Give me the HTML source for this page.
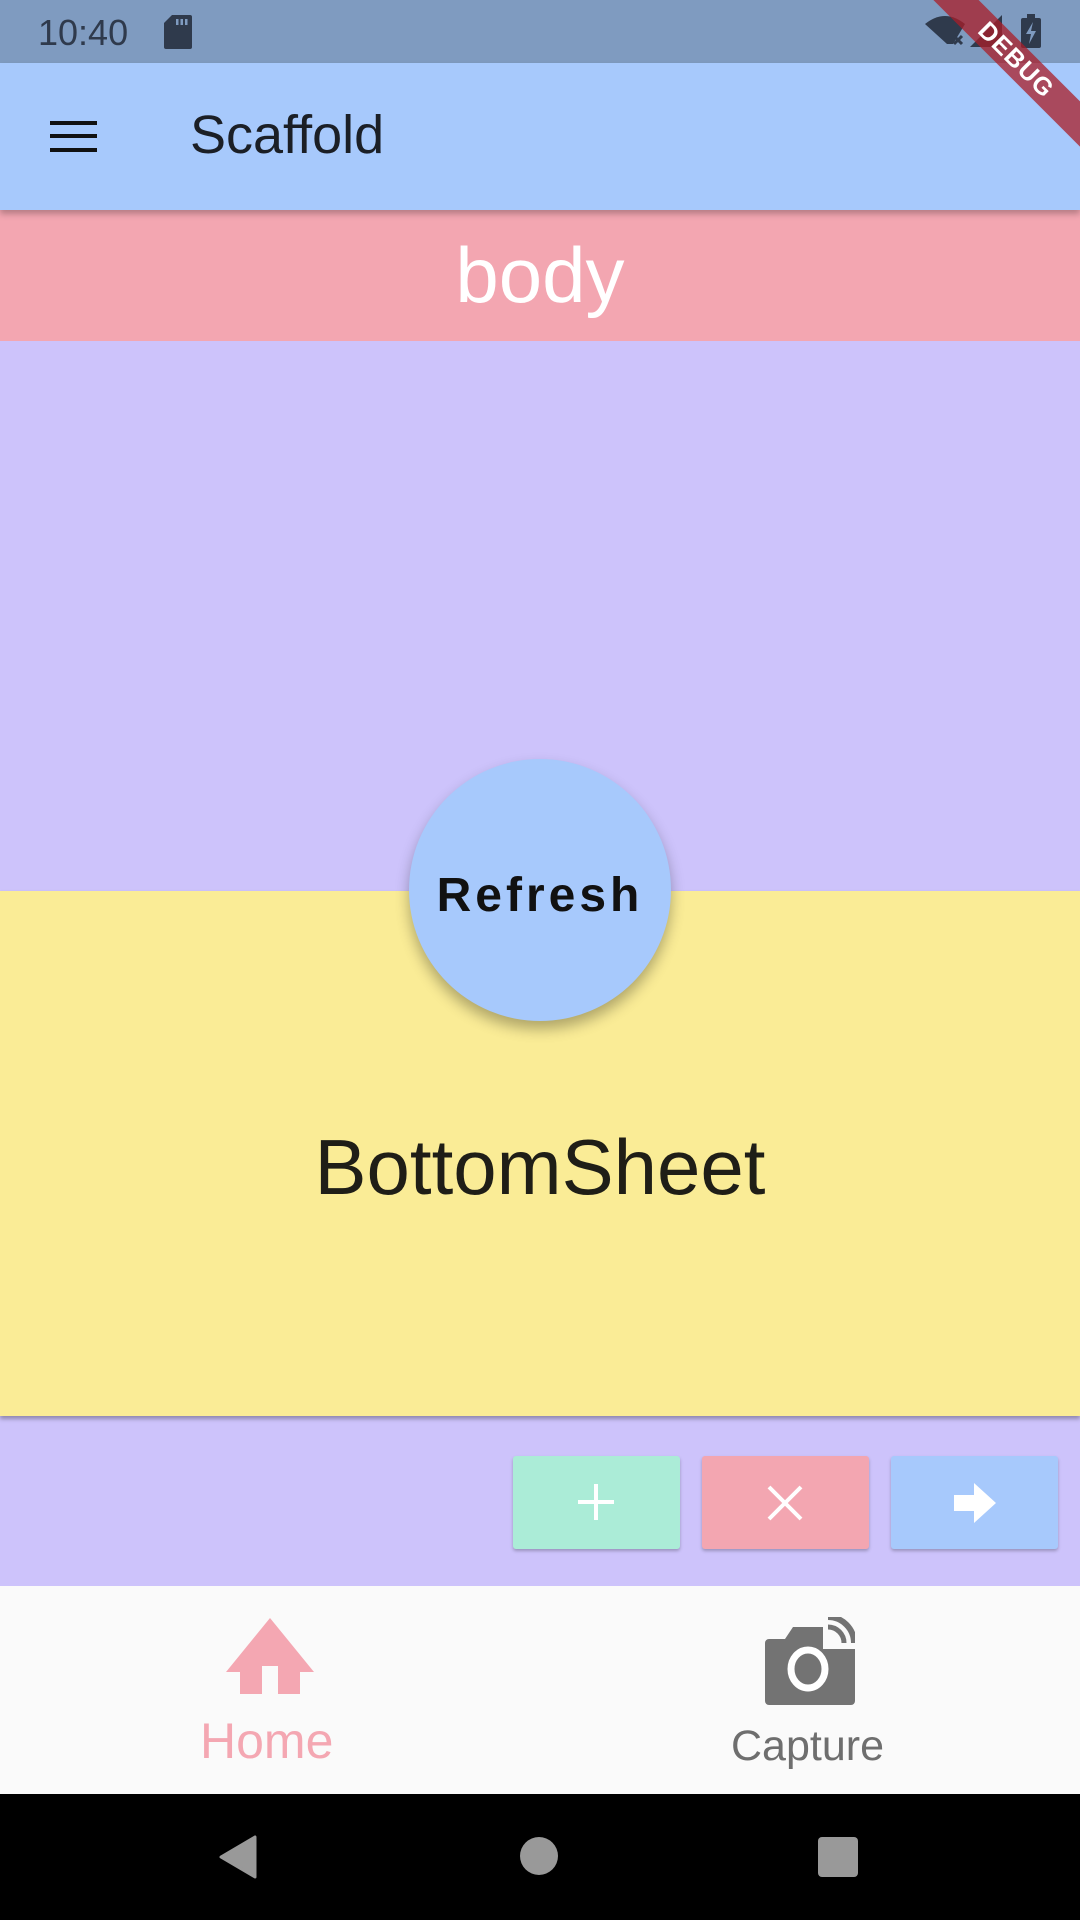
<!DOCTYPE html>
<html><head><meta charset="utf-8"><style>
*{margin:0;padding:0;box-sizing:border-box}
body{width:1080px;height:1920px;position:relative;overflow:hidden;font-family:"Liberation Sans",sans-serif;background:#cdc3fb}
.a{position:absolute}
</style></head><body>
<div class="a" style="left:0;top:0;width:1080px;height:63px;background:#7f9bc0"></div>
<div class="a" style="left:38px;top:12px;font-size:36px;color:#2f3a4c">10:40</div>
<svg class="a" style="left:164px;top:15px" width="28" height="34" viewBox="0 0 28 34"><path d="M8 0H26a2 2 0 0 1 2 2V32a2 2 0 0 1-2 2H2a2 2 0 0 1-2-2V8Z" fill="#2f3a4c"/><rect x="12" y="4" width="2.5" height="6" fill="#7f9bc0"/><rect x="16.5" y="4" width="2.5" height="6" fill="#7f9bc0"/><rect x="21" y="4" width="2.5" height="6" fill="#7f9bc0"/></svg>
<svg class="a" style="left:925px;top:14px" width="50" height="34" viewBox="0 0 50 34"><path d="M0 10Q20-6 40 10L28 30H22Z" fill="#2f3a4c"/><path d="M29 22l8 8M37 22l-8 8" stroke="#2f3a4c" stroke-width="3"/></svg>
<svg class="a" style="left:970px;top:15px" width="40" height="32"><path d="M32 0V32H0Z" fill="#2f3a4c"/></svg>
<svg class="a" style="left:1021px;top:14px" width="22" height="34"><rect x="0" y="4" width="20" height="30" rx="2" fill="#2f3a4c"/><rect x="6" y="0" width="8" height="5" fill="#2f3a4c"/><path d="M12 8L5 20H10L8 30L15 17H10Z" fill="#7f9bc0"/></svg>
<div class="a" style="left:0;top:63px;width:1080px;height:147px;background:#a7c9fc;box-shadow:0 4px 6px rgba(0,0,0,.25);z-index:2"></div>
<div class="a" style="left:50px;top:121px;width:47px;height:4px;background:#111;z-index:3"></div>
<div class="a" style="left:50px;top:134px;width:47px;height:4px;background:#111;z-index:3"></div>
<div class="a" style="left:50px;top:148px;width:47px;height:4px;background:#111;z-index:3"></div>
<div class="a" style="left:190px;top:104px;font-size:54px;color:#1b1f26;z-index:3">Scaffold</div>
<div class="a" style="left:0;top:210px;width:1080px;height:131px;background:#f3a6b1;color:#fff;font-size:78px;text-align:center;line-height:131px">body</div>
<div class="a" style="left:0;top:891px;width:1080px;height:525px;background:#faec96;box-shadow:0 3px 4px rgba(0,0,0,.3)"></div>
<div class="a" style="left:0;top:1122px;width:1080px;text-align:center;font-size:78px;color:#1f1e17">BottomSheet</div>
<div class="a" style="left:409px;top:759px;width:262px;height:262px;border-radius:50%;background:#a7c9fc;box-shadow:0 8px 14px rgba(0,0,0,.3);text-align:center;line-height:274px;font-size:48px;font-weight:bold;letter-spacing:4px;color:#111">Refresh</div>
<div class="a" style="left:513px;top:1456px;width:167px;height:93px;background:#abecd7;border-radius:3px;box-shadow:0 2px 3px rgba(0,0,0,.25)"></div>
<div class="a" style="left:702px;top:1456px;width:167px;height:93px;background:#f3a6b1;border-radius:3px;box-shadow:0 2px 3px rgba(0,0,0,.25)"></div>
<div class="a" style="left:891px;top:1456px;width:167px;height:93px;background:#a7c9fc;border-radius:3px;box-shadow:0 2px 3px rgba(0,0,0,.25)"></div>
<svg class="a" style="left:576px;top:1482px" width="40" height="40"><path d="M20 2V38M2 20H38" stroke="#fff" stroke-width="4"/></svg>
<svg class="a" style="left:766px;top:1484px" width="38" height="38"><path d="M3 3L35 35M35 3L3 35" stroke="#fff" stroke-width="4"/></svg>
<svg class="a" style="left:954px;top:1483px" width="42" height="40"><path d="M0 12H20V0L42 20L20 40V28H0Z" fill="#fff"/></svg>
<div class="a" style="left:0;top:1586px;width:1080px;height:208px;background:#fafafa"></div>
<svg class="a" style="left:226px;top:1618px" width="88" height="76" viewBox="0 0 88 76"><path d="M44 0L88 54H74V76H52V48H36V76H14V54H0Z" fill="#f4a7b2"/></svg>
<div class="a" style="left:200px;top:1712px;font-size:50px;color:#f4a7b2">Home</div>
<svg class="a" style="left:765px;top:1617px" width="90" height="88" viewBox="0 0 90 88"><path d="M0 26a4 4 0 0 1 4-4H20L28 10H58V32H90V84a4 4 0 0 1-4 4H4a4 4 0 0 1-4-4Z" fill="#737373"/><ellipse cx="43" cy="52" rx="17" ry="19" fill="none" stroke="#fff" stroke-width="7"/><path d="M63 0A26 26 0 0 1 89 26" stroke="#737373" stroke-width="6" fill="none"/><path d="M63 10A16 16 0 0 1 79 26" stroke="#737373" stroke-width="5" fill="none"/></svg>
<div class="a" style="left:731px;top:1722px;font-size:43px;color:#6e6e6e">Capture</div>
<div class="a" style="left:0;top:1794px;width:1080px;height:126px;background:#000"></div>
<svg class="a" style="left:218px;top:1834px" width="40" height="46"><path d="M37 3V43L3 23Z" fill="#999" stroke="#999" stroke-width="3" stroke-linejoin="round"/></svg>
<div class="a" style="left:520px;top:1837px;width:38px;height:38px;border-radius:50%;background:#999"></div>
<div class="a" style="left:818px;top:1837px;width:40px;height:40px;border-radius:4px;background:#999"></div>
<div class="a" style="left:856px;top:44px;width:320px;height:32px;background:rgba(170,30,40,.75);transform:rotate(45deg);color:#fff;font-weight:bold;font-size:25px;text-align:center;line-height:32px;z-index:5;letter-spacing:1px">DEBUG</div>
</body></html>
